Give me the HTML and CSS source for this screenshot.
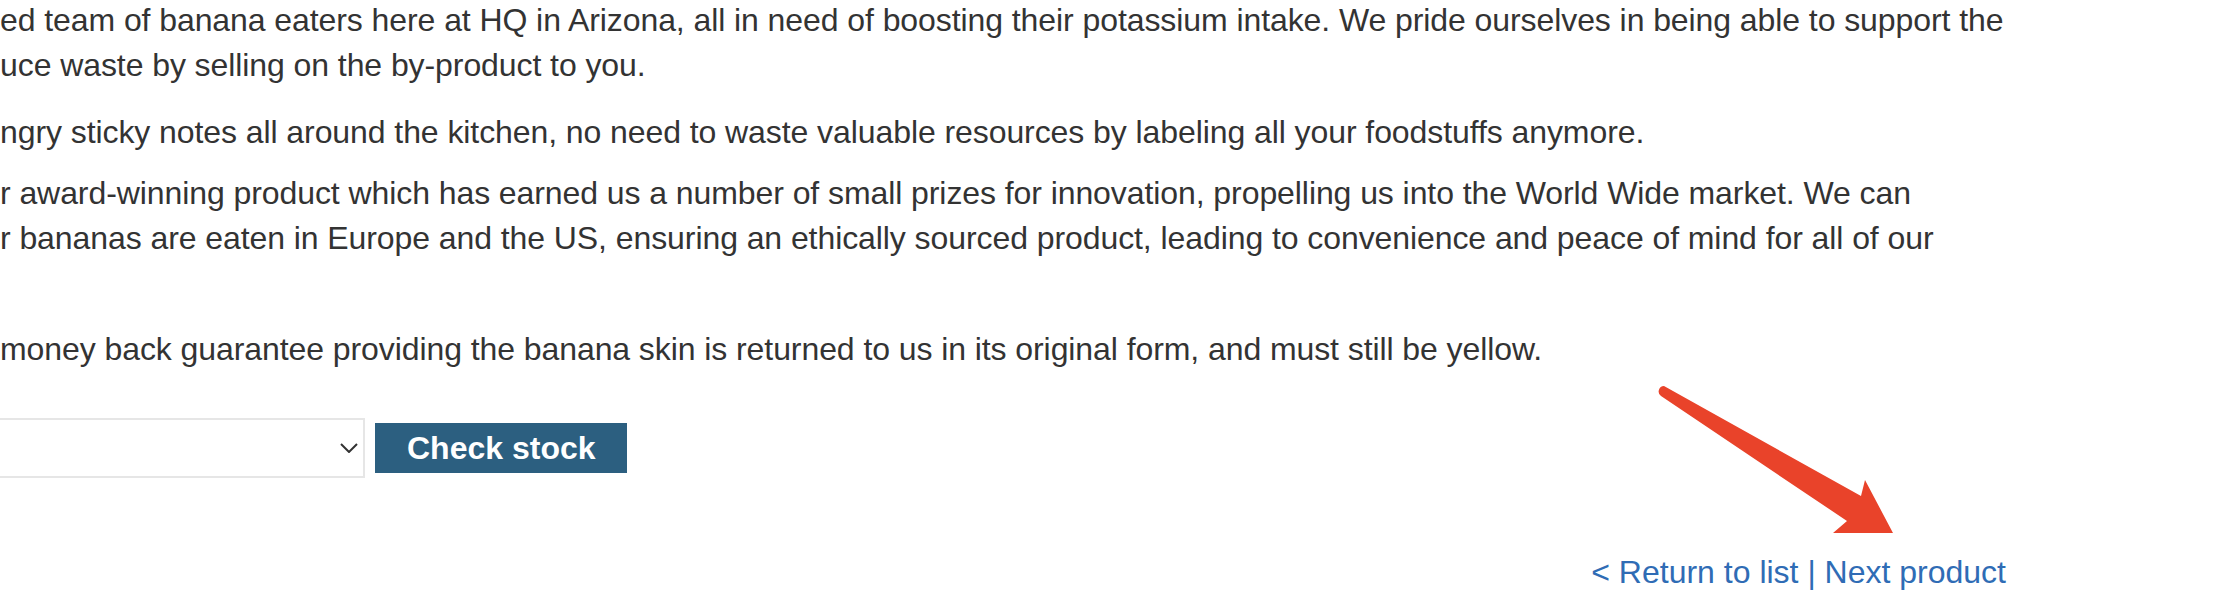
FILE: index.html
```html
<!DOCTYPE html>
<html lang="en">
<head>
<meta charset="utf-8">
<title>Product</title>
<link rel="stylesheet" href="styles.css">
</head>
<body>
<div class="page">
  <div class="description">
    <p class="p1">ed team of banana eaters here at HQ in Arizona, all in need of boosting their potassium intake. We pride ourselves in being able to support the<br>uce waste by selling on the by-product to you.</p>
    <p class="p2">ngry sticky notes all around the kitchen, no need to waste valuable resources by labeling all your foodstuffs anymore.</p>
    <p class="p3">r award-winning product which has earned us a number of small prizes for innovation, propelling us into the World Wide market. We can<br>r bananas are eaten in Europe and the US, ensuring an ethically sourced product, leading to convenience and peace of mind for all of our<br>&nbsp;</p>
    <p class="p4">money back guarantee providing the banana skin is returned to us in its original form, and must still be yellow.</p>
  </div>
  <form class="stock-form">
    <div class="select-wrap">
      <select class="store-select" aria-label="Store">
        <option></option>
      </select>
      <svg class="chevron" width="18" height="10" viewBox="0 0 18 10" aria-hidden="true"><path d="M1 1 L9 9 L17 1" fill="none" stroke="#333" stroke-width="2"/></svg>
    </div>
    <button type="button" class="check-btn">Check stock</button>
  </form>
  <div class="nav-links">
    <a href="#" class="link">&lt; Return to list</a><span class="sep"> | </span><a href="#" class="link">Next product</a>
  </div>
  <svg class="annotation-arrow" width="270" height="180" viewBox="0 0 270 180" aria-hidden="true">
    <path d="M24 18 L221 128 L225 112 L253 165 L193 165 L207 153 L21 28 A5.5 5.5 0 0 1 24 18 Z" fill="#e9432a"/>
  </svg>
</div>
</body>
</html>
```
FILE: styles.css
```css
html, body {
  margin: 0;
  padding: 0;
  background: #ffffff;
}

body {
  font-family: "Liberation Sans", Arial, sans-serif;
  font-size: 32px;
  line-height: 1.4;
  color: #333333;
  overflow: hidden;
}

.page {
  position: relative;
  width: 2006px;
}

.description p {
  margin: 0;
  white-space: nowrap;
  letter-spacing: -0.08px;
}

.description .p1 {
  margin-top: -2px;
}

.description .p2 {
  margin-top: 22px;
}

.description .p3 {
  margin-top: 17px;
}

.description .p4 {
  margin-top: 21px;
}

.stock-form {
  display: flex;
  align-items: center;
  gap: 10px;
  margin: 46px 0 0 -20px;
}

.select-wrap {
  position: relative;
  display: flex;
}

.store-select {
  appearance: none;
  -webkit-appearance: none;
  box-sizing: border-box;
  width: 385px;
  height: 60px;
  border: 2px solid #e6e6e6;
  border-radius: 0;
  background: #ffffff;
  margin: 0;
  font: inherit;
}

.chevron {
  position: absolute;
  right: 7px;
  top: 25px;
  pointer-events: none;
}

.check-btn {
  box-sizing: border-box;
  height: 50px;
  padding: 0 31px 0 32px;
  margin: 0;
  border: none;
  border-radius: 0;
  background: #2c5f80;
  color: #ffffff;
  font-family: "Liberation Sans", Arial, sans-serif;
  font-size: 32px;
  font-weight: bold;
  line-height: 50px;
}

.nav-links {
  margin-top: 72px;
  text-align: right;
  color: #2f6cb5;
}

.link {
  color: #2f6cb5;
  text-decoration: none;
}

.annotation-arrow {
  position: absolute;
  left: 1640px;
  top: 370px;
}
```
